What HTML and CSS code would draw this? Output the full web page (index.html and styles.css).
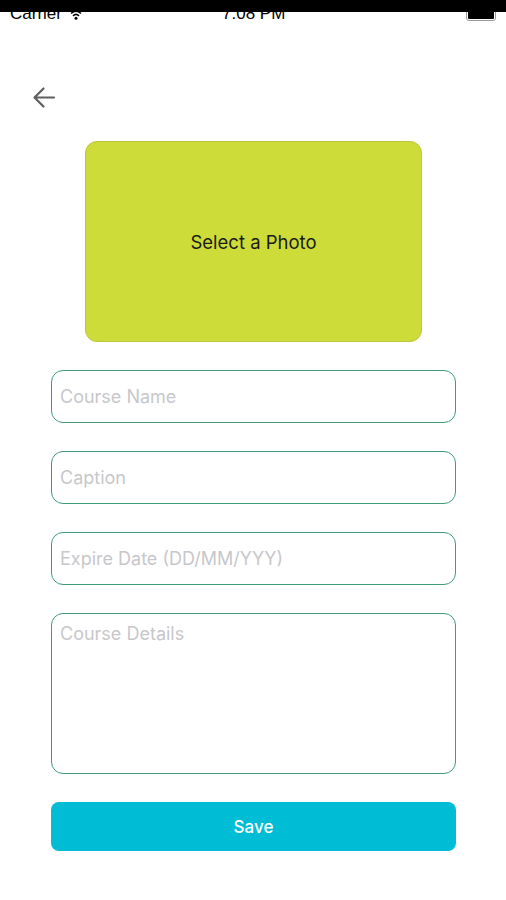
FILE: index.html
```html
<!DOCTYPE html>
<html>
<head>
<meta charset="utf-8">
<link rel="stylesheet" href="styles.css">
</head>
<body>
<div class="status">
  <div class="status-items">
    <span class="carrier">Carrier</span>
    <svg class="wifi" width="12" height="10" viewBox="0 0 12 10"><path d="M1 3.5 Q6 -1 11 3.5" fill="none" stroke="#000" stroke-width="1.6"/><path d="M3 5.8 Q6 3 9 5.8" fill="none" stroke="#000" stroke-width="1.6"/><circle cx="6" cy="8.3" r="1.5" fill="#000"/></svg>
    <span class="time">7:08 PM</span>
    <span class="battery"><span class="battery-fill"></span></span>
  </div>
  <div class="notch-band"></div>
</div>

<div class="header">
  <svg class="back" width="26" height="26" viewBox="0 0 26 26"><path d="M23 12.5 H4 M12.5 3.5 L3.5 12.5 L12.5 21.5" fill="none" stroke="#5f5f5f" stroke-width="2.2" stroke-linecap="round" stroke-linejoin="round"/></svg>
</div>

<div class="photo-wrap">
  <div class="photo">Select a Photo</div>
</div>

<form class="form">
  <div class="field"><span class="ph">Course Name</span></div>
  <div class="field"><span class="ph">Caption</span></div>
  <div class="field"><span class="ph">Expire Date (DD/MM/YYY)</span></div>
  <div class="field area"><span class="ph">Course Details</span></div>
  <div class="save">Save</div>
</form>
</body>
</html>
```
FILE: styles.css
```css
* { box-sizing: border-box; }
html, body { margin: 0; padding: 0; background: #fff; }
body { width: 506px; height: 900px; overflow: hidden; font-family: Inter, Roboto, "Liberation Sans", sans-serif; }

.status { position: relative; height: 24px; overflow: hidden; }
.status-items { display: flex; align-items: flex-end; height: 22px; padding: 0 9px 0 10px; font-size: 17px; line-height: 17px; color: #000; font-family: "Liberation Sans", sans-serif; }
.carrier { width: 60px; }
.wifi { margin-bottom: 2px; }
.time { margin-left: 140px; }
.battery { margin-left: auto; margin-right: 1px; width: 30px; height: 14px; border: 1.5px solid #999; border-radius: 3px; padding: 1px; margin-bottom: 1px; }
.battery-fill { display: block; width: 100%; height: 100%; background: #000; border-radius: 1px; }
.notch-band { position: absolute; left: 0; top: 0; width: 100%; height: 12px; background: #000; }

.header { height: 117px; padding: 61px 0 0 31px; }
.back { display: block; }

.photo-wrap { padding-left: 85px; }
.photo { width: 337px; height: 201px; background: #cddc39; border: 1px solid #bcc63d; border-radius: 12px; display: flex; align-items: center; justify-content: center; font-size: 18.5px; color: #1a1a1a; }

.form { display: flex; flex-direction: column; gap: 28px; padding: 28px 50px 0 51px; margin: 0; }
.field { height: 53px; border: 1.5px solid #3f9c76; border-radius: 12px; display: flex; align-items: center; padding: 0 8px; }
.field.area { height: 161px; align-items: flex-start; padding-top: 9px; }
.ph { font-size: 18px; color: #c7c7cb; }
.save { height: 49px; background: #00bcd4; border-radius: 8px; display: flex; align-items: center; justify-content: center; color: #fff; font-size: 17px; font-weight: 500; }
```
